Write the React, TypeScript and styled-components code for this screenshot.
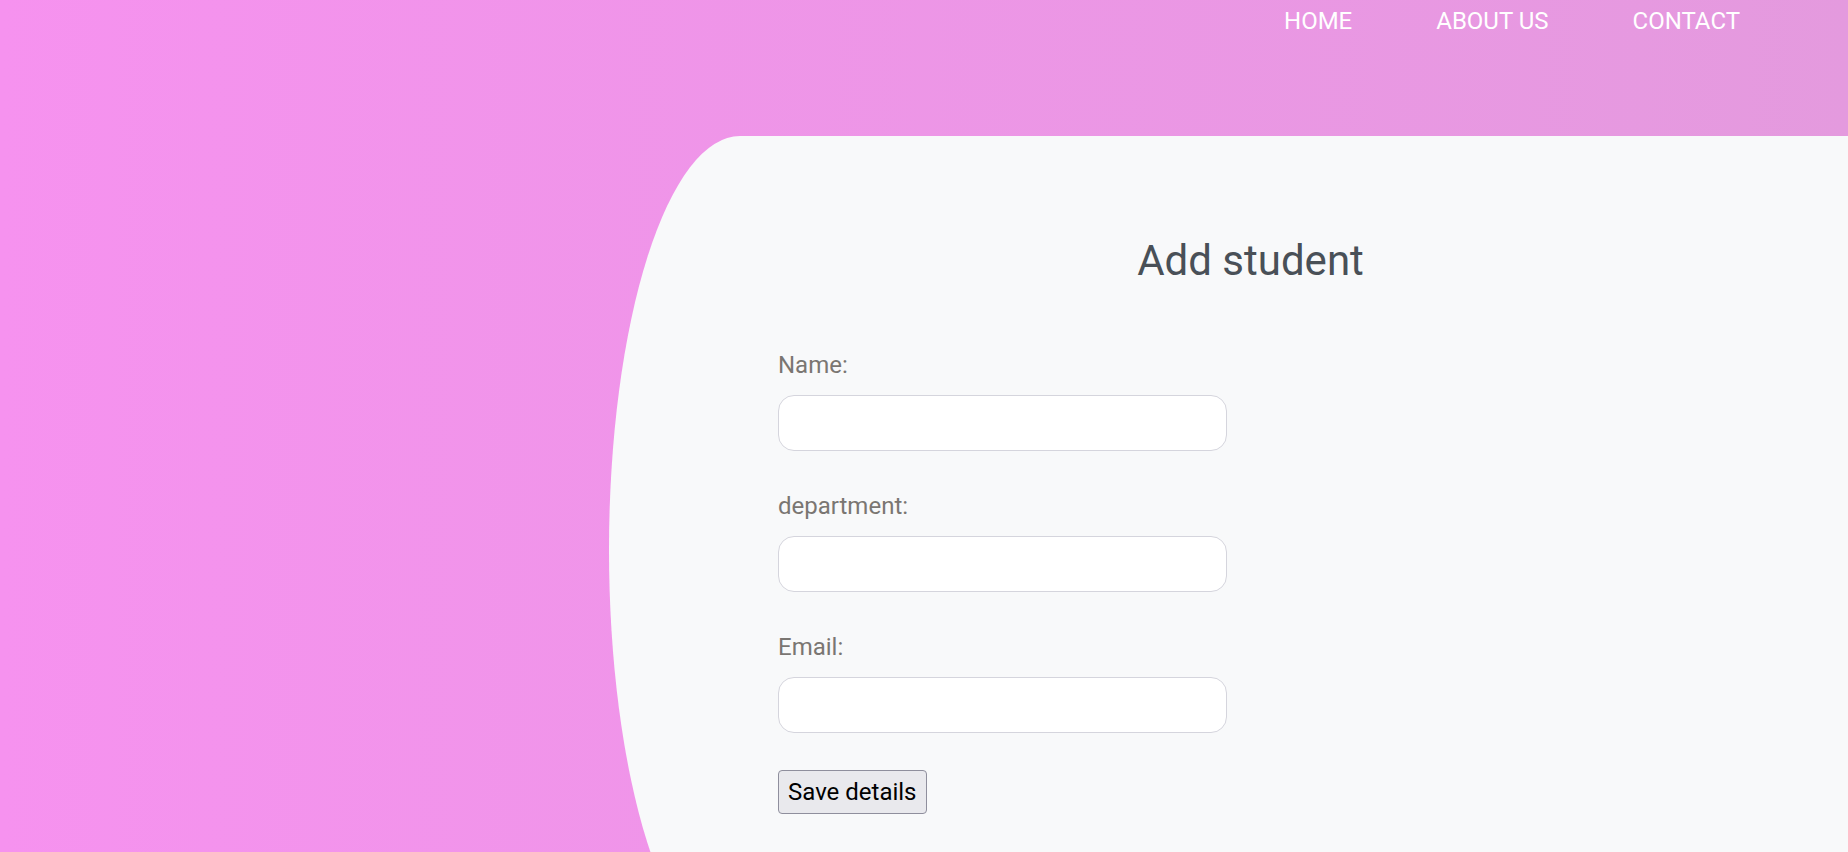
import styled, { createGlobalStyle } from "styled-components";

const GlobalStyle = createGlobalStyle`
  body {
    margin: 0;
    font-family: Roboto, "Liberation Sans", sans-serif;
  }
`;

const App = () => {
  return (
    <Page>
      <GlobalStyle />
      <Header>
        <NavLink href="#">HOME</NavLink>
        <NavLink href="#">ABOUT US</NavLink>
        <NavLink href="#">CONTACT</NavLink>
      </Header>

      <Panel>
        <Title>Add student</Title>
        <Form onSubmit={(e) => e.preventDefault()}>
          <Field>
            <Label htmlFor="name">Name:</Label>
            <Input id="name" type="text" />
          </Field>
          <Field>
            <Label htmlFor="department">department:</Label>
            <Input id="department" type="text" />
          </Field>
          <Field>
            <Label htmlFor="email">Email:</Label>
            <Input id="email" type="email" />
          </Field>
          <Button type="submit">Save details</Button>
        </Form>
      </Panel>
    </Page>
  );
};

export default App;

const Page = styled.div`
  min-height: 100vh;
  background: linear-gradient(to right, #f692ef, #e49ade);
`;

const Header = styled.nav`
  height: 136px;
  box-sizing: border-box;
  display: flex;
  justify-content: flex-end;
  align-items: flex-start;
  gap: 84px;
  padding: 7px 108px 0 0;
`;

const NavLink = styled.a`
  color: white;
  font-size: 24px;
  line-height: normal;
  text-decoration: none;
`;

const Panel = styled.main`
  margin-left: 609px;
  height: 828px;
  box-sizing: border-box;
  background-color: #f8f9fa;
  border-radius: 131px 0 0 131px / 414px 0 0 414px;
  padding: 100px 0 0 44px;
  display: flex;
  flex-direction: column;
`;

const Title = styled.h1`
  margin: 0 0 66px;
  text-align: center;
  font-size: 42px;
  font-weight: 400;
  line-height: normal;
  color: #495057;
`;

const Form = styled.form`
  display: flex;
  flex-direction: column;
  align-items: flex-start;
  margin-left: 125px;
`;

const Field = styled.div`
  display: flex;
  flex-direction: column;
  margin-bottom: 41px;

  &:last-of-type {
    margin-bottom: 37px;
  }
`;

const Label = styled.label`
  font-size: 24px;
  line-height: normal;
  color: #7a7672;
  margin-bottom: 16px;
`;

const Input = styled.input`
  width: 449px;
  height: 56px;
  box-sizing: border-box;
  border: 1px solid #d5d5dd;
  border-radius: 16px;
  background-color: white;
  outline: none;
  padding: 0 14px;
  font-size: 20px;
  font-family: inherit;
`;

const Button = styled.button`
  font-family: inherit;
  font-size: 24px;
  line-height: normal;
  color: black;
  background-color: #e9e9ed;
  border: 1px solid #8f8f9d;
  border-radius: 4px;
  padding: 7px 9px;
  cursor: pointer;
`;
